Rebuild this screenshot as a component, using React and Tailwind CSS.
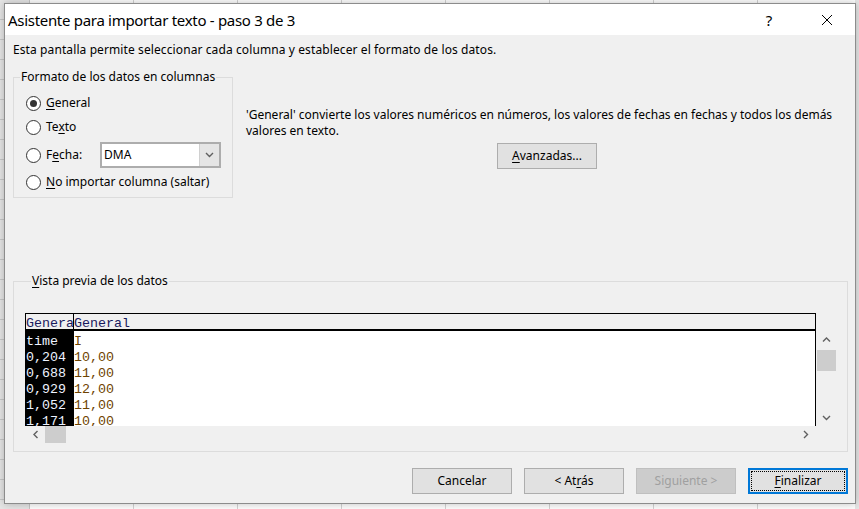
import React from "react";

function Radio({ checked }) {
  return (
    <span className="w-[15px] h-[15px] rounded-full border border-[#333333] bg-white flex items-center justify-center shrink-0">
      {checked && <span className="w-[7px] h-[7px] rounded-full bg-[#333333]" />}
    </span>
  );
}

function Chevron({ dir = "down", className = "" }) {
  const pts = {
    down: "1,1 4.5,4.5 8,1",
    up: "1,4.5 4.5,1 8,4.5",
    left: "4.5,1 1,4.5 4.5,8",
    right: "1,1 4.5,4.5 1,8",
  }[dir];
  const vert = dir === "down" || dir === "up";
  return (
    <svg width={vert ? 9 : 6} height={vert ? 6 : 9} viewBox={vert ? "0 0 9 6" : "0 0 6 9"} className={className}>
      <polyline points={pts} fill="none" stroke="#606060" strokeWidth="1.4" />
    </svg>
  );
}

function Btn({ children, disabled }) {
  return (
    <div
      className={
        "w-[100px] h-[26px] border flex items-center justify-center " +
        (disabled ? "border-[#bfbfbf] bg-[#cccccc] text-[#a0a0a0]" : "border-[#adadad] bg-[#e1e1e1] text-black")
      }
    >
      {children}
    </div>
  );
}

const col1 = ["time", "0,204", "0,688", "0,929", "1,052", "1,171"];
const col2 = ["I", "10,00", "11,00", "12,00", "11,00", "10,00"];

export default function App() {
  return (
    <div className="relative w-[859px] h-[509px] overflow-hidden bg-white font-['Noto_Sans',sans-serif] text-[12px] text-black">
      {/* spreadsheet behind the dialog */}
      <div className="absolute left-[30px] top-0 right-0 bottom-0 bg-[repeating-linear-gradient(90deg,#ffffff_0,#ffffff_103px,#d4d4d4_103px,#d4d4d4_104px)]" />
      <div className="absolute left-0 top-0 bottom-0 w-[30px] border-r border-[#c6c6c6] bg-[repeating-linear-gradient(180deg,#e6e6e6_0,#e6e6e6_19px,#c8c8c8_19px,#c8c8c8_20px)]" />
      <div className="absolute right-0 top-0 bottom-0 w-[4px] bg-[#e6e6e6]" />

      {/* dialog window */}
      <div className="absolute left-[4px] top-[3px] w-[852px] h-[501px] border border-[#8c8c8c] bg-[#f0f0f0] flex flex-col shadow-[0_0_8px_rgba(0,0,0,0.25)]">
        {/* title bar */}
        <div className="h-[31px] bg-white flex items-center shrink-0">
          <div className="flex-1 pl-[3px] text-[15px] tracking-[-0.3px] leading-[20px] whitespace-nowrap">
            Asistente para importar texto - paso 3 de 3
          </div>
          <div className="w-[16px] text-center text-[15px] leading-[20px]">?</div>
          <div className="w-[44px]" />
          <svg width="12" height="12" viewBox="0 0 12 12">
            <path d="M1 1 L11 11 M11 1 L1 11" stroke="#000" strokeWidth="1" />
          </svg>
          <div className="w-[22px]" />
        </div>

        {/* body */}
        <div className="flex-1 flex flex-col pl-[8px] pr-[7px]">
          <p className="pt-[7px] leading-[16px] whitespace-nowrap tracking-[0.1px]">
            Esta pantalla permite seleccionar cada columna y establecer el formato de los datos.
          </p>

          <div className="mt-[11px] flex items-start">
            <fieldset className="w-[220px] border border-[#dcdcdc] pt-[8px] pb-[5px]">
              <legend className="ml-[6px] px-[1px] leading-[16px]">Formato de los datos en columnas</legend>
              <div className="h-[20px] flex items-center gap-[5px] pl-[12px]">
                <Radio checked />
                <span>
                  <u className="underline-offset-[2px]">G</u>eneral
                </span>
              </div>
              <div className="mt-[4px] h-[20px] flex items-center gap-[5px] pl-[12px]">
                <Radio />
                <span>
                  Te<u className="underline-offset-[2px]">x</u>to
                </span>
              </div>
              <div className="mt-[5px] h-[26px] flex items-center pl-[12px]">
                <Radio />
                <span className="w-[59px] pl-[5px]">
                  F<u className="underline-offset-[2px]">e</u>cha:
                </span>
                <div className="w-[121px] h-[26px] border-2 border-[#adadad] bg-white flex items-center">
                  <span className="flex-1 pl-[2px]">DMA</span>
                  <span className="w-[20px] h-full bg-[#e5e5e5] border-l border-[#d0d0d0] flex items-center justify-center">
                    <Chevron dir="down" />
                  </span>
                </div>
              </div>
              <div className="mt-[4px] h-[20px] flex items-center gap-[5px] pl-[12px]">
                <Radio />
                <span>
                  <u className="underline-offset-[2px]">N</u>o importar columna (saltar)
                </span>
              </div>
            </fieldset>

            <div className="flex-1 ml-[13px] pt-[38px] flex flex-col">
              <div className="leading-[16px] whitespace-nowrap">
                'General' convierte los valores numéricos en números, los valores de fechas en fechas y todos los demás
              </div>
              <div className="leading-[16px] whitespace-nowrap">valores en texto.</div>
              <div className="mt-[4px] self-center">
                <Btn>
                  <span>
                    <u className="underline-offset-[2px]">A</u>vanzadas...
                  </span>
                </Btn>
              </div>
            </div>
          </div>

          <fieldset className="mt-[75px] border border-[#dcdcdc] pt-[24px] pl-[11px] pb-[8px]">
            <legend className="ml-[6px] px-[1px] leading-[16px]">
              <u className="underline-offset-[2px]">V</u>ista previa de los datos
            </legend>
            <div className="flex">
              <div className="w-[791px] flex flex-col">
                <div className="h-[113px] border-t border-l border-r border-black flex font-['Liberation_Mono',monospace] text-[13.33px] leading-[16px] overflow-hidden">
                  <div className="w-[48px] border-r border-black flex flex-col shrink-0">
                    <div className="h-[15px] pt-[2px] bg-[#f0f0f0] text-[#1a1a5e] overflow-hidden whitespace-nowrap">General</div>
                    <div className="h-[2px] bg-black" />
                    <div className="flex-1 bg-black text-[#eef3ff] pt-[3px] overflow-hidden">
                      {col1.map((v, i) => (
                        <div key={i} className="h-[16px] whitespace-nowrap">
                          {v}
                        </div>
                      ))}
                    </div>
                  </div>
                  <div className="flex-1 flex flex-col">
                    <div className="h-[15px] pt-[2px] bg-[#f0f0f0] text-[#1a1a5e] overflow-hidden whitespace-nowrap">General</div>
                    <div className="h-[2px] bg-black" />
                    <div className="flex-1 bg-white text-[#6e4300] pt-[3px] overflow-hidden">
                      {col2.map((v, i) => (
                        <div key={i} className="h-[16px] whitespace-nowrap">
                          {v}
                        </div>
                      ))}
                    </div>
                  </div>
                </div>
                {/* horizontal scrollbar */}
                <div className="h-[17px] flex items-center">
                  <div className="w-[17px] h-[17px] flex items-center justify-center ml-[2px]">
                    <Chevron dir="left" />
                  </div>
                  <div className="ml-[1px] w-[21px] h-[17px] bg-[#cdcdcd]" />
                  <div className="flex-1" />
                  <div className="w-[17px] h-[17px] flex items-center justify-center mr-[2px]">
                    <Chevron dir="right" />
                  </div>
                </div>
              </div>
              {/* vertical scrollbar */}
              <div className="w-[20px] flex flex-col">
                <div className="h-[18px]" />
                <div className="h-[95px] flex flex-col items-center">
                  <div className="h-[17px] w-full flex items-center justify-center">
                    <Chevron dir="up" />
                  </div>
                  <div className="mt-[2px] w-[19px] h-[21px] bg-[#cdcdcd]" />
                  <div className="flex-1" />
                  <div className="h-[17px] w-full flex items-center justify-center">
                    <Chevron dir="down" />
                  </div>
                </div>
              </div>
            </div>
          </fieldset>

          <div className="mt-[16px] flex justify-end gap-[12px]">
            <Btn>Cancelar</Btn>
            <Btn>
              <span>
                &lt; At<u className="underline-offset-[2px]">r</u>ás
              </span>
            </Btn>
            <Btn disabled>Siguiente &gt;</Btn>
            <div className="w-[100px] h-[26px] border-2 border-[#0078d7] bg-[#e1e1e1] p-[1px]">
              <div className="w-full h-full border border-dotted border-black flex items-center justify-center">
                <span>
                  <u className="underline-offset-[2px]">F</u>inalizar
                </span>
              </div>
            </div>
          </div>
        </div>
      </div>
    </div>
  );
}
